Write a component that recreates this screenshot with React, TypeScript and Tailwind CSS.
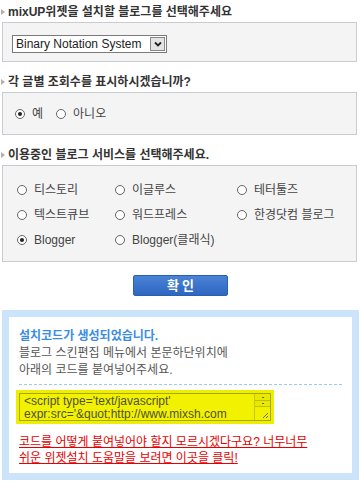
import React from "react"

const font = "font-['Liberation_Sans','Noto_Sans_CJK_KR',sans-serif]"

const Marker = () => (
  <span className="mr-[3px] inline-block h-0 w-0 border-y-[3px] border-l-[4px] border-y-transparent border-l-[#b0b0b0]" />
)

const Header = ({ children }: { children: React.ReactNode }) => (
  <div className="flex h-[20px] items-center pl-[1px] text-[12px] font-bold text-[#333]">
    <Marker />
    {children}
  </div>
)

const Radio = ({ checked = false }: { checked?: boolean }) => (
  <span className="inline-flex h-[10px] w-[10px] shrink-0 items-center justify-center rounded-full border border-[#666] bg-white">
    {checked && <span className="h-[4px] w-[4px] rounded-full bg-[#222]" />}
  </span>
)

const Option = ({ label, checked }: { label: string; checked?: boolean }) => (
  <div className="flex items-center gap-[7px] text-[12px] text-[#444]">
    <Radio checked={checked} />
    <span>{label}</span>
  </div>
)

const blogs = [
  { label: "티스토리" },
  { label: "이글루스" },
  { label: "테터툴즈" },
  { label: "텍스트큐브" },
  { label: "워드프레스" },
  { label: "한경닷컴 블로그" },
  { label: "Blogger", checked: true },
  { label: "Blogger(클래식)" },
]

export default function App() {
  return (
    <div className={`w-[361px] bg-white pt-[2px] ${font}`}>
      <Header>mixUP위젯을 설치할 블로그를 선택해주세요</Header>
      <div className="mx-[2px] h-[40px] w-[355px] border border-[#c8ccd2] bg-[#f4f4f4] pl-[9px] pt-[12px]">
        <div className="flex h-[18px] w-[155px] items-center border border-[#7a7a7a] bg-white">
          <span className="flex-1 whitespace-nowrap pl-[3px] text-[12px] leading-none text-[#222]">
            Binary Notation System
          </span>
          <span className="mr-[1px] flex h-[14px] w-[15px] shrink-0 items-center justify-center border border-[#888] bg-[#e4e4e4]">
            <svg width="8" height="6" viewBox="0 0 8 6">
              <path d="M1 1.5 L4 4.5 L7 1.5" stroke="#222" strokeWidth="1.8" fill="none" />
            </svg>
          </span>
        </div>
      </div>

      <div className="mt-[10px]">
        <Header>각 글별 조회수를 표시하시겠습니까?</Header>
      </div>
      <div className="mx-[2px] flex h-[43px] w-[355px] items-center gap-[13px] border border-[#c8ccd2] bg-[#f4f4f4] pl-[12px]">
        <Option label="예" checked />
        <Option label="아니오" />
      </div>

      <div className="mt-[10px]">
        <Header>이용중인 블로그 서비스를 선택해주세요.</Header>
      </div>
      <div className="mx-[2px] grid h-[97px] w-[355px] grid-cols-[98px_122px_1fr] content-start border border-[#c8ccd2] bg-[#f4f4f4] pl-[14px] pt-[11px]">
        {blogs.map((b) => (
          <div key={b.label} className="flex h-[25px] items-center">
            <Option label={b.label} checked={b.checked} />
          </div>
        ))}
      </div>

      <div className="mt-[13px] flex justify-center">
        <button className="flex h-[21px] w-[95px] items-center justify-center rounded-[2px] border border-[#2d5fb0] bg-gradient-to-b from-[#4a82d6] to-[#2f66c0] pl-[3px] text-[13px] font-bold tracking-[3px] text-white">
          확인
        </button>
      </div>

      <div className="mx-[2px] mt-[14px] w-[357px] border-[7px] border-[#cce4fa] bg-white px-[10px] pb-[7px] pt-[11px]">
        <div className="text-[12px] font-bold leading-[17px] text-[#3a8de2]">설치코드가 생성되었습니다.</div>
        <div className="text-[12px] leading-[17px] text-[#555]">
          블로그 스킨편집 메뉴에서 본문하단위치에
          <br />
          아래의 코드를 붙여넣어주세요.
        </div>
        <div className="mt-[5px] border-t border-dashed border-[#9ccaf2]" />
        <div className="-ml-[3px] mt-[5px] w-[258px] bg-[#eeee00] p-[3px]">
          <div className="flex h-[28px] border border-[#a8a800] bg-[#f2f200]">
            <div className="flex-1 overflow-hidden whitespace-nowrap pl-[4px] pt-[1px] text-[12px] leading-[13px] text-[#505030]">
              &lt;script type='text/javascript'
              <br />
              expr:src='&amp;quot;http://www.mixsh.com
            </div>
            <div className="flex w-[16px] flex-col border-l border-[#c8c800]">
              <div className="flex h-[7px] items-center justify-center border-b border-[#c0c000] bg-[#e8e800]">
                <span className="h-[1px] w-[2px] bg-[#666]" />
              </div>
              <div className="flex h-[6px] items-center justify-center border-b border-[#c0c000] bg-[#e8e800]">
                <span className="h-[1px] w-[2px] bg-[#666]" />
              </div>
              <div className="flex flex-1 items-end justify-end pb-[1px] pr-[1px]">
                <svg width="7" height="7" viewBox="0 0 7 7">
                  <path d="M1 6 L6 1 M4 6 L6 4" stroke="#666" strokeWidth="1" />
                </svg>
              </div>
            </div>
          </div>
        </div>
        <div className="mt-[10px] text-[12px] leading-[16px] text-[#e60000] underline">
          코드를 어떻게 붙여넣어야 할지 모르시겠다구요? 너무너무
          <br />
          쉬운 위젯설치 도움말을 보려면 이곳을 클릭!
        </div>
      </div>
    </div>
  )
}
